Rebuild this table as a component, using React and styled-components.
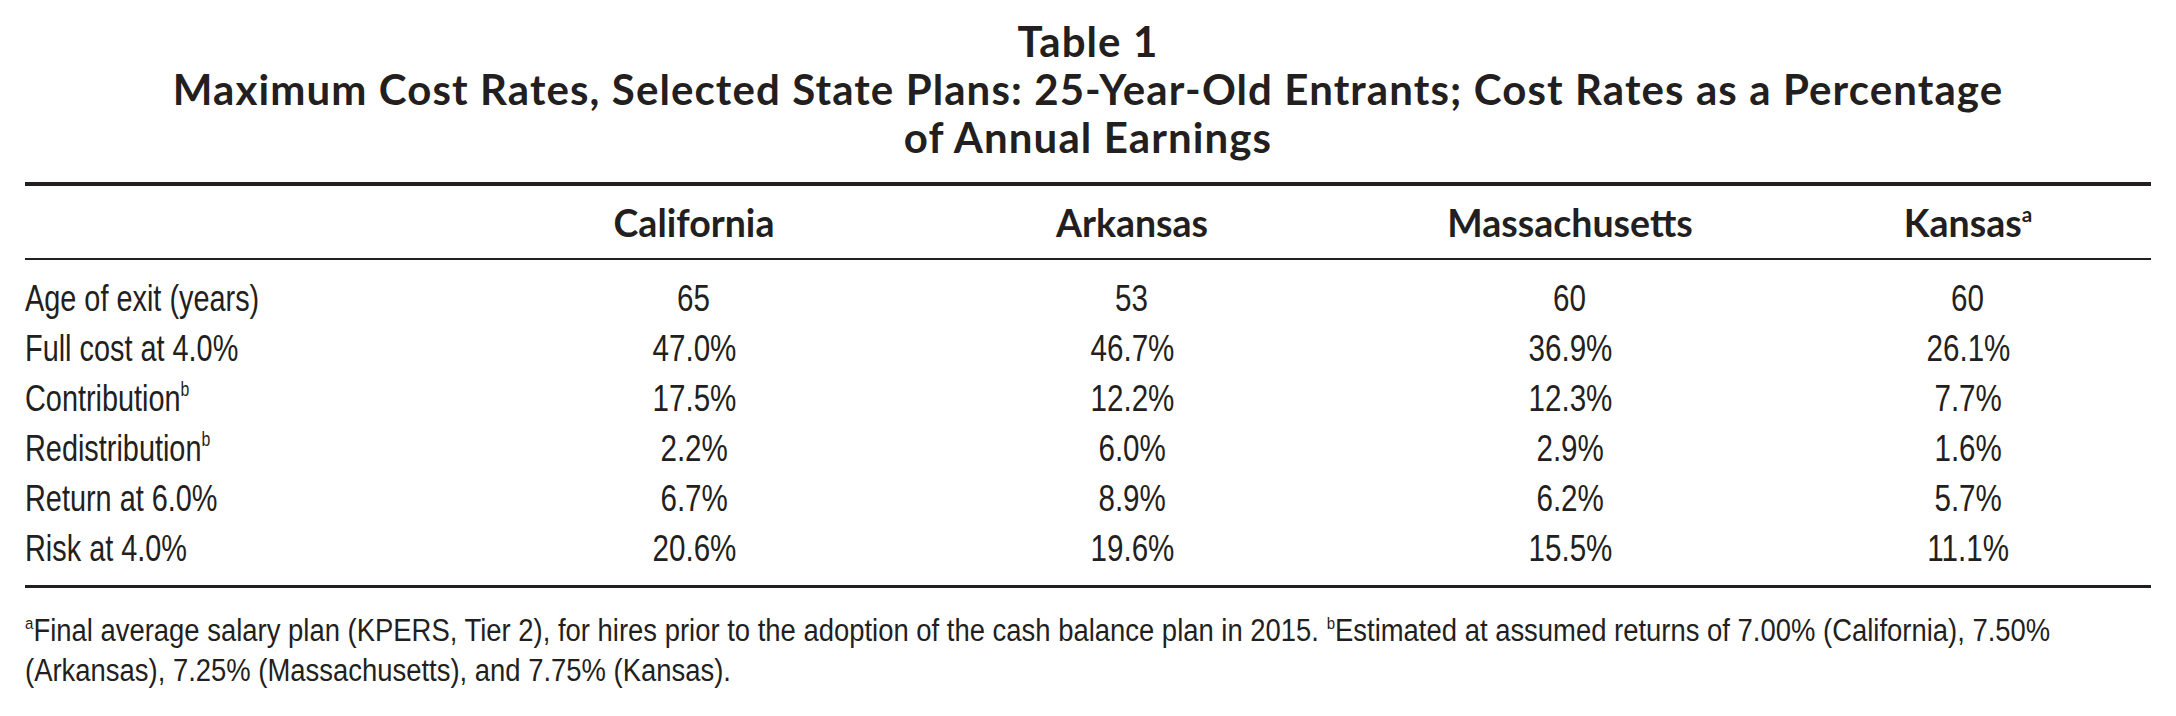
import React from 'react';
import styled, { createGlobalStyle } from 'styled-components';

const GlobalStyle = createGlobalStyle`
  html, body { margin: 0; padding: 0; background: #ffffff; }
`;

const COLS = '454px 430px 446px 430px 366px';
const INK = '#231f20';
const HEAD_FONT = 'Lato, "Open Sans", sans-serif';
const BODY_FONT = '"Liberation Sans", Arial, sans-serif';

const Page = styled.div`
  width: 2176px;
  height: 716px;
  box-sizing: border-box;
  padding: 0 25px;
  color: ${INK};
  overflow: hidden;
`;

const Caption = styled.h1`
  margin: 0 0 21px;
  padding-top: 17px;
  text-align: center;
  font-family: ${HEAD_FONT};
  font-weight: 700;
  font-size: 42px;
  line-height: 48px;
  letter-spacing: 1.1px;
`;

const Rule = styled.div`
  height: ${(p) => p.$size}px;
  background: ${INK};
`;

const HeaderRow = styled.div`
  display: grid;
  grid-template-columns: ${COLS};
  align-items: center;
  height: 72px;
  font-family: ${HEAD_FONT};
  font-weight: 700;
  font-size: 37.5px;
`;

const Body = styled.div`
  padding: 14px 0 11px;
`;

const Row = styled.div`
  display: grid;
  grid-template-columns: ${COLS};
  align-items: center;
  height: 50px;
  font-family: ${BODY_FONT};
  font-size: 37px;
`;

const Cell = styled.div`
  text-align: ${(p) => (p.$label ? 'left' : 'center')};
  white-space: nowrap;
`;

/* condensed rendering of the narrow grotesque used in the table body */
const Narrow = styled.span`
  display: inline-block;
  transform: scaleX(${(p) => p.$scale || 0.79});
  transform-origin: ${(p) => (p.$left ? 'left center' : 'center center')};
`;

const Sup = styled.sup`
  font-size: 0.55em;
  line-height: 0;
  vertical-align: 0.72em;
`;

const Footnote = styled.p`
  margin: 23px 0 0;
  font-family: ${BODY_FONT};
  font-size: 31px;
  line-height: 40px;
  white-space: nowrap;
  transform: scaleX(0.885);
  transform-origin: left top;
`;

const states = [
  { name: 'California' },
  { name: 'Arkansas' },
  { name: 'Massachusetts' },
  { name: 'Kansas', note: 'a' },
];

const rows = [
  { label: 'Age of exit (years)', values: ['65', '53', '60', '60'] },
  { label: 'Full cost at 4.0%', values: ['47.0%', '46.7%', '36.9%', '26.1%'] },
  { label: 'Contribution', note: 'b', values: ['17.5%', '12.2%', '12.3%', '7.7%'] },
  { label: 'Redistribution', note: 'b', values: ['2.2%', '6.0%', '2.9%', '1.6%'] },
  { label: 'Return at 6.0%', values: ['6.7%', '8.9%', '6.2%', '5.7%'] },
  { label: 'Risk at 4.0%', values: ['20.6%', '19.6%', '15.5%', '11.1%'] },
];

export default function App() {
  return (
    <>
      <GlobalStyle />
      <Page>
        <Caption>
          Table 1
          <br />
          Maximum Cost Rates, Selected State Plans: 25-Year-Old Entrants; Cost Rates as a Percentage
          <br />
          of Annual Earnings
        </Caption>
        <Rule $size={4} />
        <HeaderRow>
          <Cell $label />
          {states.map((s) => (
            <Cell key={s.name}>
              {s.name}
              {s.note && <Sup>{s.note}</Sup>}
            </Cell>
          ))}
        </HeaderRow>
        <Rule $size={2} />
        <Body>
          {rows.map((r) => (
            <Row key={r.label}>
              <Cell $label>
                <Narrow $left $scale={0.78}>
                  {r.label}
                  {r.note && <Sup>{r.note}</Sup>}
                </Narrow>
              </Cell>
              {r.values.map((v, i) => (
                <Cell key={i}>
                  <Narrow $scale={0.8}>{v}</Narrow>
                </Cell>
              ))}
            </Row>
          ))}
        </Body>
        <Rule $size={3} />
        <Footnote>
          <Sup>a</Sup>Final average salary plan (KPERS, Tier 2), for hires prior to the adoption of the cash balance plan in 2015.{' '}
          <Sup>b</Sup>Estimated at assumed returns of 7.00% (California), 7.50%
          <br />
          (Arkansas), 7.25% (Massachusetts), and 7.75% (Kansas).
        </Footnote>
      </Page>
    </>
  );
}
